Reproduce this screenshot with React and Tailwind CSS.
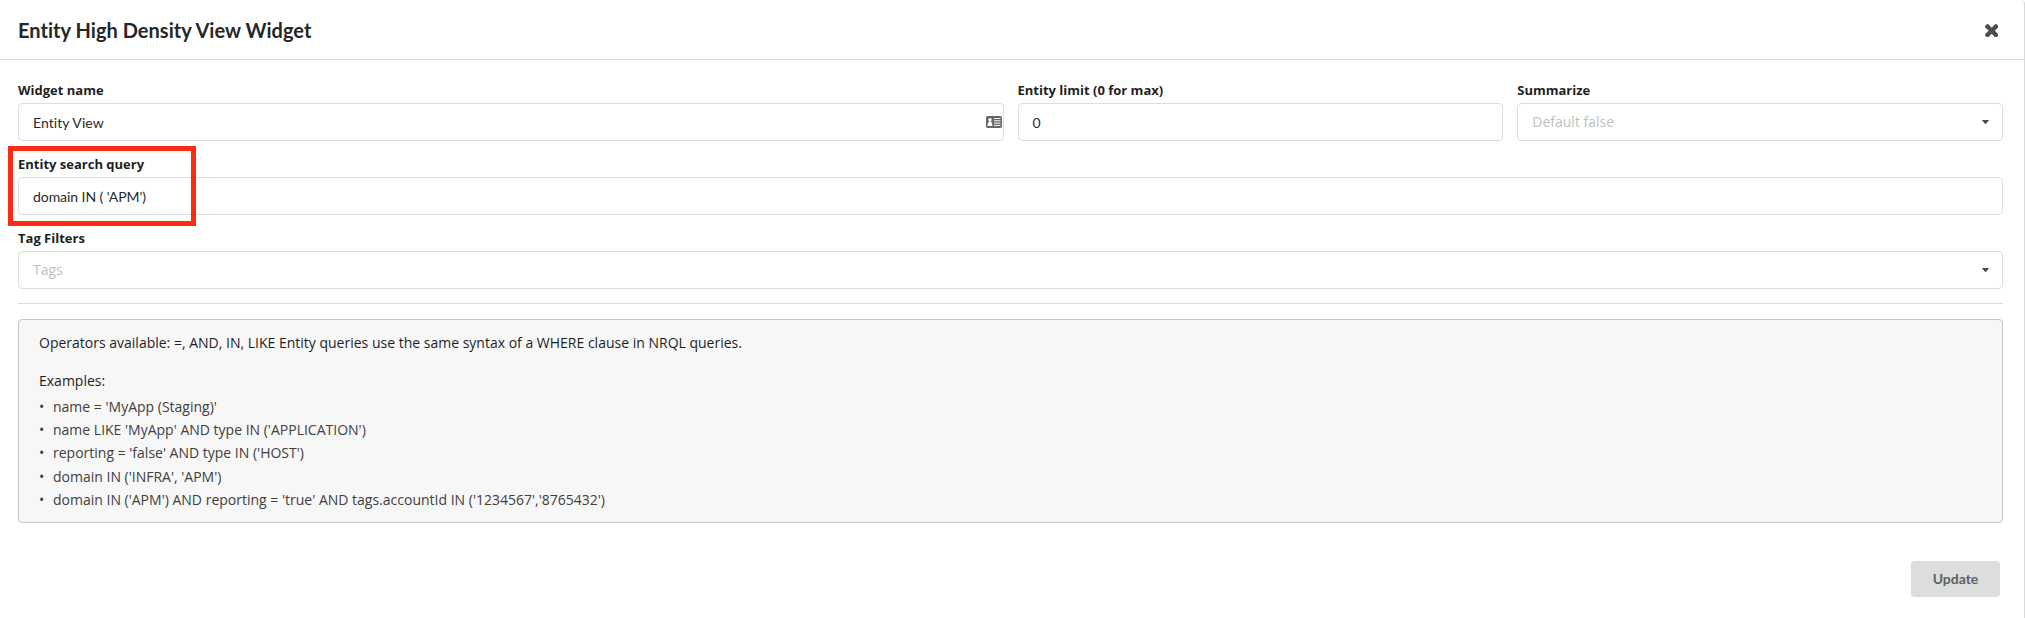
const examples = [
  "name = 'MyApp (Staging)'",
  "name LIKE 'MyApp' AND type IN ('APPLICATION')",
  "reporting = 'false' AND type IN ('HOST')",
  "domain IN ('INFRA', 'APM')",
  "domain IN ('APM') AND reporting = 'true' AND tags.accountId IN ('1234567','8765432')",
];

function Field({ label, className = '', children }) {
  return (
    <div className={`flex flex-col gap-1 ${className}`}>
      <div className="h-[18px] text-[13px] leading-[18px] font-bold whitespace-nowrap text-[#1f1f1f]">{label}</div>
      <div className="flex h-[38px] items-center rounded-[4px] border border-[#dededf] bg-white pl-[14px] text-[14px] leading-[17px]">
        {children}
      </div>
    </div>
  );
}

function InputText({ className = '', children }) {
  return <span className={`grow pt-px font-[Lato,sans-serif] text-[#1f2b2d] ${className}`}>{children}</span>;
}

function Placeholder({ children }) {
  return <span className="grow pb-px text-[#bfbfbf]">{children}</span>;
}

function Caret() {
  return (
    <svg className="mr-[13.5px] block" width="7" height="4" viewBox="0 0 7 4" fill="#4a4a4a">
      <path d="M.4 0h6.2q.5.1.2.6L4 3.7q-.5.5-1 0L.2.6Q-.1.1.4 0z" />
    </svg>
  );
}

function ContactCard() {
  return (
    <svg className="mr-px block" width="16" height="12" viewBox="0 0 16 12">
      <rect width="16" height="12" rx="1.8" fill="#666" />
      <circle cx="4" cy="3.8" r="1.7" fill="#fff" />
      <path d="M3.2 4.5h1.6v1.3c1.2.7 1.6 1.6 1.6 4.2H1.6c0-2.6.4-3.5 1.6-4.2z" fill="#fff" />
      <path d="M8 2.5H14.5M8 4.8H14.5M8 7.1H14.5M8 9.4H14.5" stroke="#fff" strokeWidth="1" />
    </svg>
  );
}

export default function App() {
  return (
    <div className="h-[618px] w-full overflow-hidden rounded-tr-[4px] border-r border-[#d9d9d9] bg-white font-['Open_Sans',sans-serif]">
      <header className="flex h-[60px] items-center justify-between border-b border-[#dcdcdc] pr-[26px] pl-[18px]">
        <h1 className="font-[Lato,sans-serif] text-[20px] leading-[26px] font-bold tracking-[0.03px] text-[#262626]">
          Entity High Density View Widget
        </h1>
        <svg className="mt-[2px] block" width="13.5" height="13.5" viewBox="110 366 1188 1188" fill="#4d4d4d">
          <path d="M1298 1322q0 40-28 68l-136 136q-28 28-68 28t-68-28l-294-294-294 294q-28 28-68 28t-68-28l-136-136q-28-28-28-68t28-68l294-294-294-294q-28-28-28-68t28-68l136-136q28-28 68-28t68 28l294 294 294-294q28-28 68-28t68 28l136 136q28 28 28 68t-28 68l-294 294 294 294q28 28 28 68z" />
        </svg>
      </header>

      <main className="pt-[21px] pr-[21px] pl-[18px]">
        <div className="flex gap-[14px]">
          <Field label="Widget name" className="w-[985.5px] shrink-0">
            <InputText className="tracking-[0.06px]">Entity View</InputText>
            <ContactCard />
          </Field>
          <Field label="Entity limit (0 for max)" className="flex-1">
            <InputText>0</InputText>
          </Field>
          <Field label="Summarize" className="flex-1">
            <Placeholder>Default false</Placeholder>
            <Caret />
          </Field>
        </div>

        <div className="relative mt-[14px]">
          <Field label="Entity search query">
            <InputText className="tracking-[-0.06px]">domain IN ( 'APM')</InputText>
          </Field>
          <div className="absolute -top-[9px] -left-[10px] h-[80px] w-[188px] border-[5px] border-[#ff2a12]" />
        </div>

        <Field label="Tag Filters" className="mt-[14px]">
          <Placeholder>Tags</Placeholder>
          <Caret />
        </Field>

        <div className="mt-[14px] h-px bg-[#dadadb]" />

        <section className="mt-[15px] h-[204px] rounded-[4px] border border-[#c5c5c5] bg-[#f7f7f7] px-[20px] pt-[13px] text-[14px] text-[#1f1f1f]">
          <p className="leading-[20px]">
            Operators available: =, AND, IN, LIKE Entity queries use the same syntax of a WHERE clause in NRQL queries.
          </p>
          <p className="mt-[18px] leading-[20px]">Examples:</p>
          <ul className="mt-[4px] text-[#404040]">
            {examples.map((text) => (
              <li key={text} className="flex h-[23.3px] items-center leading-[20px]">
                <span className="w-[14px] shrink-0">•</span>
                <span>{text}</span>
              </li>
            ))}
          </ul>
        </section>

        <div className="mt-[38px] flex justify-end pr-[3px]">
          <button className="flex h-[36px] w-[89px] items-center justify-center rounded-[4px] bg-[#dcddde] font-[Lato,sans-serif] text-[14px] leading-[14px] font-bold text-[#5f6060]">
            Update
          </button>
        </div>
      </main>
    </div>
  );
}
